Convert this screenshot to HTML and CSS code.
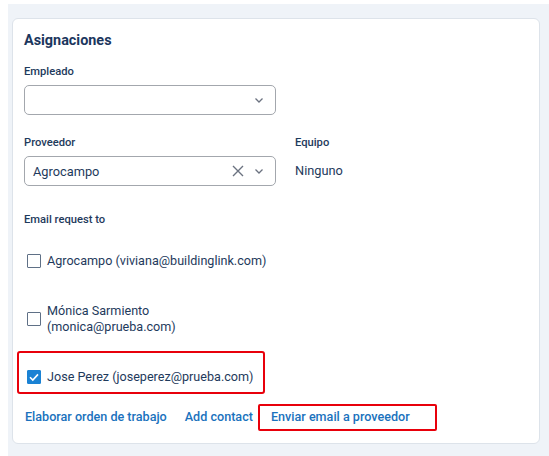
FILE: index.html
```html
<!DOCTYPE html>
<html lang="es">
<head>
    <meta charset="UTF-8">
    <meta name="viewport" content="width=device-width, initial-scale=1.0">
    <title>Asignaciones</title>
    <link rel="stylesheet" href="styles.css">
</head>
<body>

    <div class="page">
        <div class="card">
            <h2>Asignaciones</h2>

            <!-- Empleado -->
            <div class="field">
                <label>Empleado</label>
                <div class="select">
                    <span class="select-value"></span>
                    <span class="chevron">
                        <svg width="12" height="12" viewBox="0 0 12 12"><path d="M2.5 4.5 L6 8 L9.5 4.5" fill="none" stroke="#6b7280" stroke-width="1.3"/></svg>
                    </span>
                </div>
            </div>

            <!-- Proveedor / Equipo -->
            <div class="field-row">
                <div class="field">
                    <label>Proveedor</label>
                    <div class="select">
                        <span class="select-value">Agrocampo</span>
                        <span class="clear">
                            <svg width="14" height="14" viewBox="0 0 14 14"><path d="M2 2 L12 12 M12 2 L2 12" fill="none" stroke="#6b7280" stroke-width="1.4"/></svg>
                        </span>
                        <span class="chevron">
                            <svg width="12" height="12" viewBox="0 0 12 12"><path d="M2.5 4.5 L6 8 L9.5 4.5" fill="none" stroke="#6b7280" stroke-width="1.3"/></svg>
                        </span>
                    </div>
                </div>
                <div class="field">
                    <label>Equipo</label>
                    <div class="static-value">Ninguno</div>
                </div>
            </div>

            <!-- Email request -->
            <label class="section-label">Email request to</label>
            <div class="contacts">
                <div class="contact">
                    <span class="checkbox"></span>
                    <span class="contact-text">Agrocampo (viviana@buildinglink.com)</span>
                </div>
                <div class="contact">
                    <span class="checkbox"></span>
                    <span class="contact-text">Mónica Sarmiento (monica@prueba.com)</span>
                </div>
                <div class="contact highlighted">
                    <span class="checkbox checked">
                        <svg width="14" height="14" viewBox="0 0 14 14"><path d="M3 7.2 L5.8 10 L11 4.4" fill="none" stroke="#fff" stroke-width="1.6"/></svg>
                    </span>
                    <span class="contact-text">Jose Perez (joseperez@prueba.com)</span>
                </div>
            </div>

            <div class="actions">
                <a href="#">Elaborar orden de trabajo</a>
                <a href="#">Add contact</a>
                <a href="#" class="highlighted">Enviar email a proveedor</a>
            </div>
        </div>
    </div>

</body>
</html>
```

FILE: styles.css
```css
* {
    margin: 0;
    padding: 0;
    box-sizing: border-box;
}

body {
    font-family: 'Roboto', 'Liberation Sans', sans-serif;
    background-color: #fff;
    color: #1e3a5c;
    padding: 4px 0 0 8px;
}

.page {
    background-color: #eff3f8;
    padding: 14px 9px 13px 4px;
    min-height: 452px;
}

.card {
    background-color: #fff;
    border: 1px solid #dde3ea;
    border-radius: 6px;
    padding: 12px 11px 18px 11px;
}

h2 {
    font-size: 14.4px;
    line-height: 20px;
    font-weight: 700;
    color: #1b365d;
    margin-bottom: 13px;
}

label {
    display: block;
    font-size: 11.2px;
    line-height: 16px;
    font-weight: 500;
    color: #1e3a5c;
    margin-bottom: 5px;
}

.field {
    margin-bottom: 20px;
}

.select {
    width: 252px;
    height: 30px;
    border: 1px solid #a3a7ad;
    border-radius: 5px;
    display: flex;
    align-items: center;
    padding: 0 8px 0 8px;
}

.select-value {
    flex: 1;
    font-size: 12.8px;
    color: #1e3a5c;
}

.clear {
    display: flex;
    margin-right: 8px;
}

.chevron {
    display: flex;
    margin-right: 2px;
}

.field-row {
    display: grid;
    grid-template-columns: 252px auto;
    column-gap: 19px;
}

.field-row .field {
    margin-bottom: 26px;
}

.static-value {
    font-size: 12.8px;
    line-height: 30px;
    color: #1e3a5c;
}

.section-label {
    margin-bottom: 13px;
}

.contacts {
    display: flex;
    flex-direction: column;
    gap: 18px;
    width: 252px;
}

.contact {
    position: relative;
    display: flex;
    align-items: center;
    gap: 6px;
    height: 40px;
    padding-left: 3px;
}

.contact-text {
    font-size: 12.6px;
    line-height: 16px;
    color: #1e3a5c;
}

.checkbox {
    flex-shrink: 0;
    width: 14px;
    height: 14px;
    border: 1px solid #5f7086;
    border-radius: 1px;
    display: flex;
}

.checkbox.checked {
    background-color: #1a82d4;
    border-color: #1a82d4;
}

.checkbox.checked svg {
    margin: -1px;
}

.contact.highlighted::after {
    content: '';
    position: absolute;
    top: -6px;
    bottom: 3px;
    left: -7px;
    right: 11px;
    border: 2px solid #e8000b;
    border-radius: 3px;
}

.actions {
    display: flex;
    gap: 18px;
    margin-top: 12px;
    padding-left: 1px;
}

.actions a {
    position: relative;
    font-size: 12.6px;
    line-height: 16px;
    font-weight: 500;
    color: #1a72bd;
    text-decoration: none;
}

.actions a.highlighted::after {
    content: '';
    position: absolute;
    top: -5px;
    bottom: -6px;
    left: -13px;
    right: -27px;
    border: 2px solid #e8000b;
    border-radius: 2px;
}
```
